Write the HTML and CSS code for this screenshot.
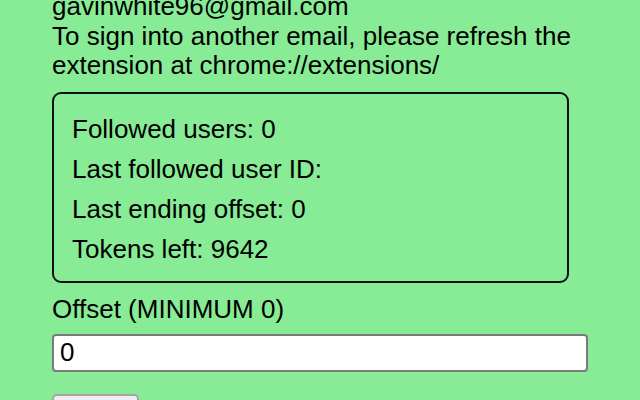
FILE: index.html
```html
<!DOCTYPE html>
<html>
<head>
<meta name="viewport" content="width=device-width, initial-scale=1">
<title>Follower</title>
<link rel="stylesheet" href="styles.css">
</head>
  <body>
    <div class="container">
      <div class="account">
        <div id="email">gavinwhite96@gmail.com</div>
        <div>To sign into another email, please refresh the extension at chrome://extensions/</div>
      </div>
      <div class="stats">
        <div>Followed users: <span id="followed">0</span></div>
        <div>Last followed user ID: <span id="lastId"></span></div>
        <div>Last ending offset: <span id="lastOffset">0</span></div>
        <div>Tokens left: <span id="tokens">9642</span></div>
      </div>
      <label for="offset" class="offset-label">Offset (MINIMUM 0)</label>
      <input type="number" id="offset" name="offset" min="0" value="0" />
      <button type="button" id="start">Start</button>
    </div>
  </body>
</html>
```

FILE: styles.css
```css
body {
  margin: 0;
  background-color: #87ec95;
  font-family: "Liberation Sans", Arial, Helvetica, sans-serif;
  font-size: 26px;
  color: #000;
}

.container {
  margin-top: -8px;
  padding-left: 52px;
  width: 536px;
  display: flex;
  flex-direction: column;
  align-items: flex-start;
}

.account {
  line-height: 29.5px;
  width: 530px;
}

.stats {
  margin-top: 11px;
  width: 477px;
  border: 2px solid #111;
  border-radius: 9px;
  padding: 15px 18px 12px;
  line-height: 40px;
}

.offset-label {
  margin-top: 11px;
}

input[type=number] {
  margin-top: 9px;
  width: 536px;
  height: 38px;
  box-sizing: border-box;
  padding: 0 6px;
  font-family: inherit;
  font-size: 26px;
  border: 2px solid #7a7a7a;
  border-radius: 4px;
  background-color: white;
  -moz-appearance: textfield;
}

input[type=number]::-webkit-inner-spin-button,
input[type=number]::-webkit-outer-spin-button {
  -webkit-appearance: none;
  margin: 0;
}

button {
  margin-top: 22px;
  padding: 4px 14px;
  font-family: inherit;
  font-size: 26px;
  background-color: #efefef;
  border: 2px solid #a5a5a5;
  border-radius: 5px;
  cursor: pointer;
}
```
